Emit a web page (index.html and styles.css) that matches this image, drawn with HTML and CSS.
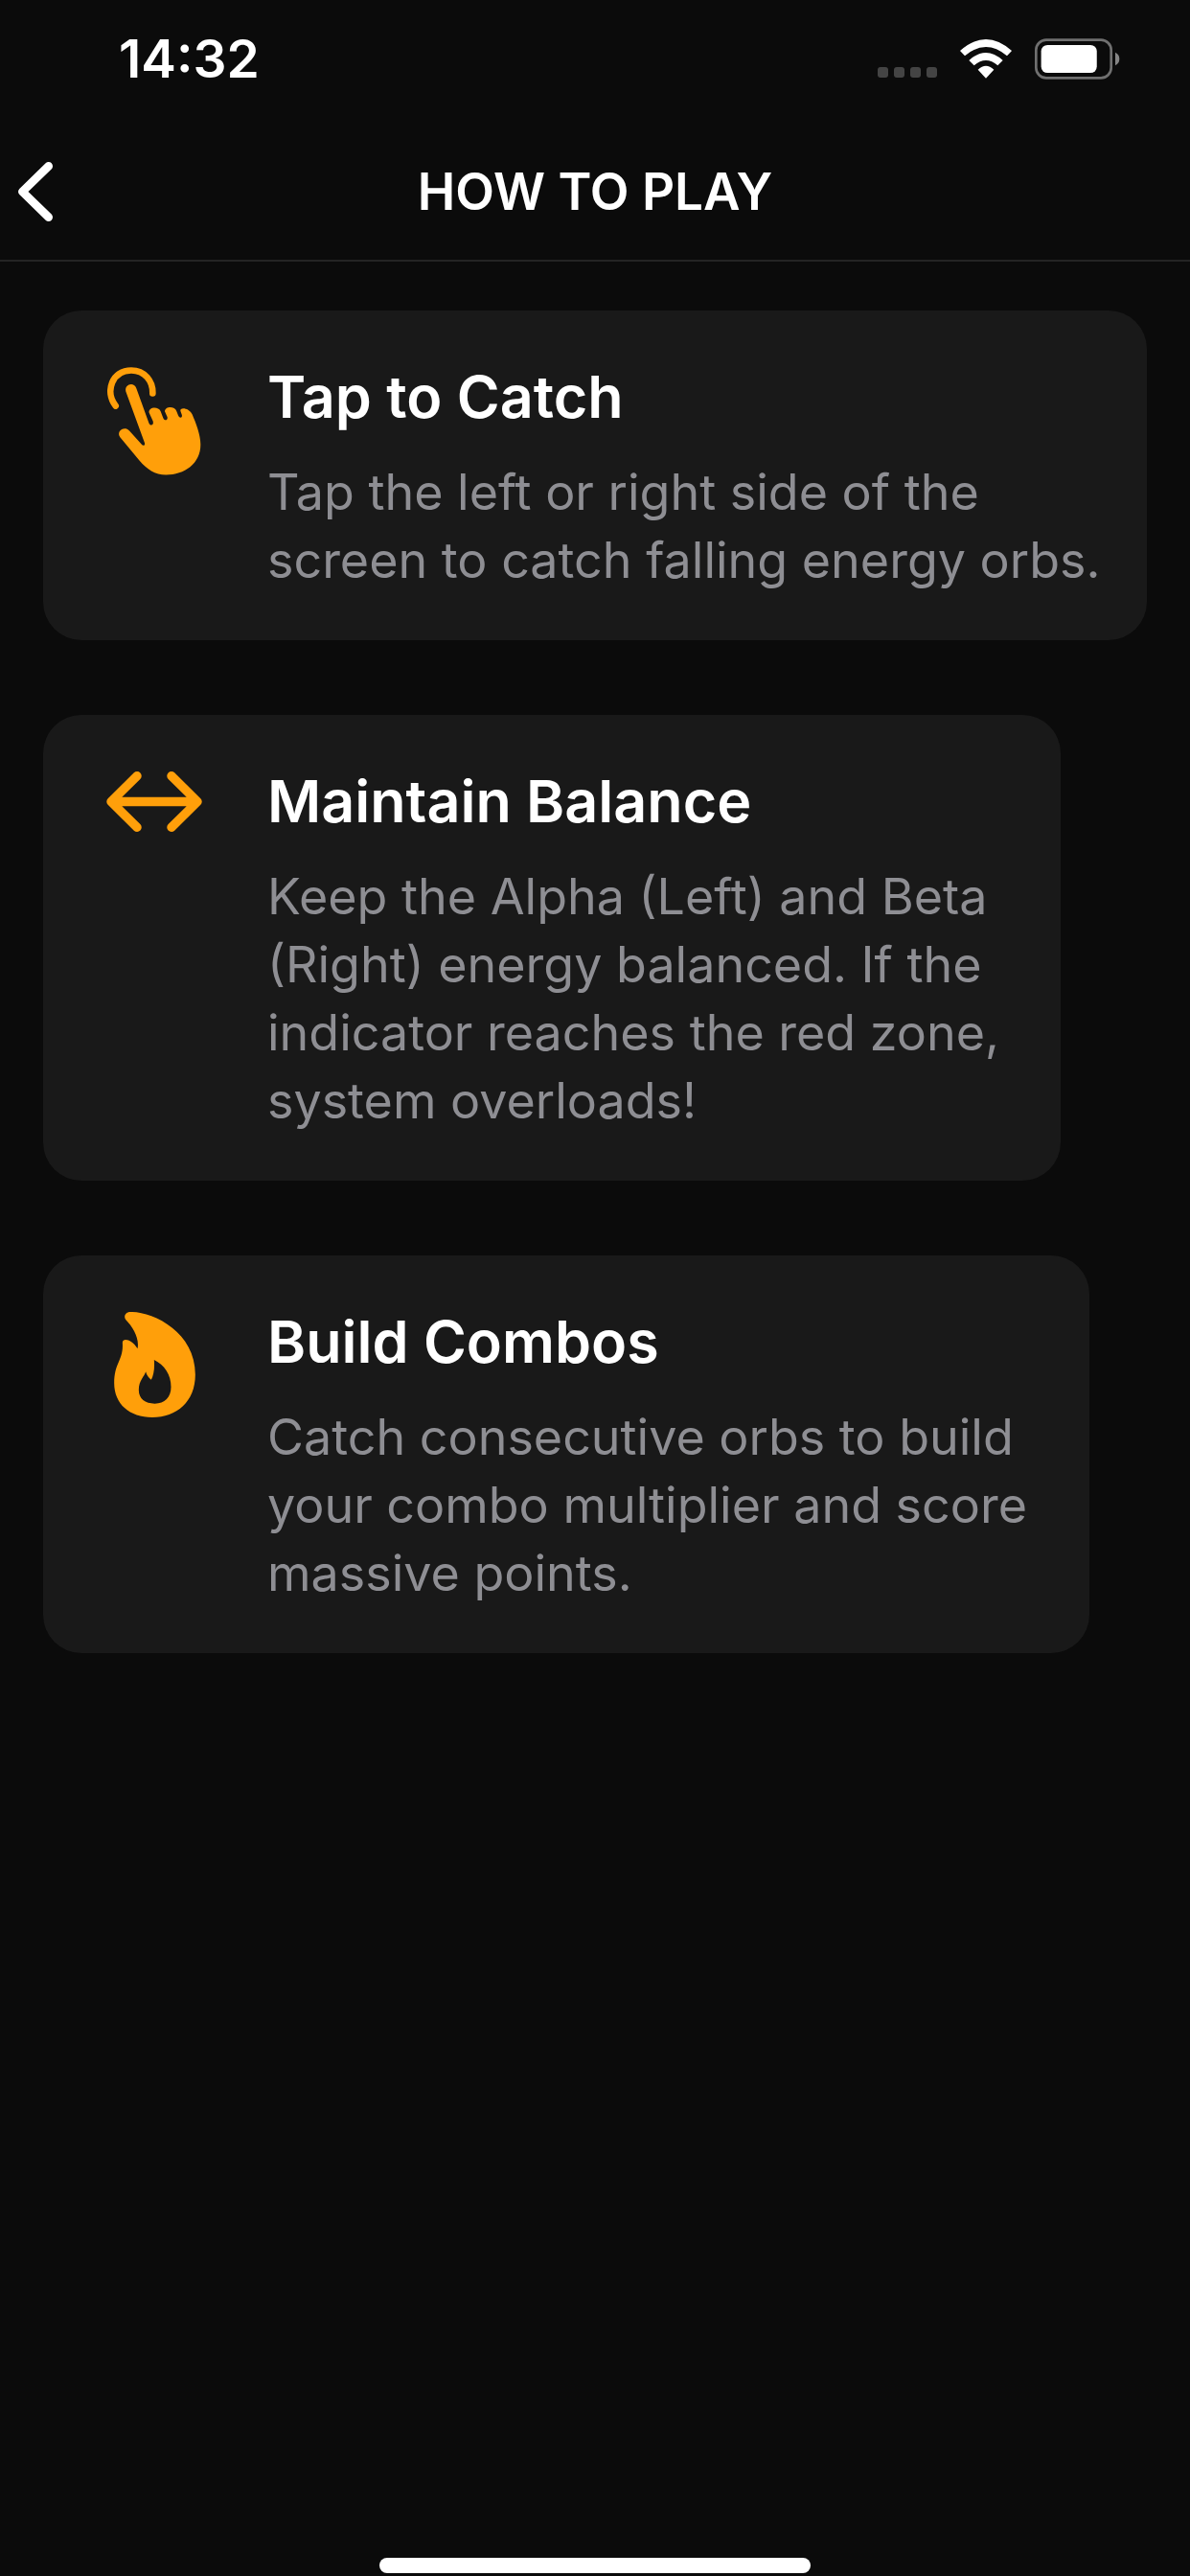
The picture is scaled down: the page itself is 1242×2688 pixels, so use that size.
FILE: index.html
```
<!DOCTYPE html>
<html lang="en">
<head>
    <meta charset="UTF-8">
    <meta name="viewport" content="width=device-width, initial-scale=1.0">
    <title>How to Play</title>
    <link rel="stylesheet" href="styles.css">
</head>
<body>
    <div class="status-bar">
        <time class="clock">14:32</time>
        <div class="status-icons">
            <div class="signal"><i></i><i></i><i></i><i></i></div>
            <svg class="wifi" viewBox="0 0 162 123" aria-hidden="true">
                <path d="M0 36 Q81 -36 162 36 L147 52 Q81 -4 15 52Z"/>
                <path d="M28 66 Q81 18 134 66 L118 82 Q81 50 44 82Z"/>
                <path d="M56 95 Q81 72 106 95 L81 122Z"/>
            </svg>
            <svg class="battery" viewBox="0 0 268 128" aria-hidden="true">
                <rect class="battery-case" x="4" y="4" width="236" height="120" rx="32"/>
                <rect class="battery-level" x="20" y="20" width="175" height="88" rx="20"/>
                <path class="battery-tip" d="M253 44 Q266 50 266 64 Q266 78 253 84Z"/>
            </svg>
        </div>
    </div>

    <header class="navbar">
        <button class="back-button" aria-label="Back">
            <svg viewBox="0 0 108 186" aria-hidden="true"><path d="M95 13 L13 93 L95 173"/></svg>
        </button>
        <h1>HOW TO PLAY</h1>
    </header>

    <main class="container">
        <section class="card">
            <div class="card-icon">
                <svg class="icon-tap" viewBox="0 0 294 338" aria-hidden="true">
                    <path class="ring" d="M26 121 C-9 75 16 10 75 10 C117 10 143 43 142 82"/>
                    <path d="M58 76 C53 53 83 45 91 66 L130 174 C134 186 147 181 143 169 L131 143 C126 125 160 120 167 138 L175 159 C180 170 190 166 188 156 L180 138 C180 123 211 120 217 138 L222 151 C227 162 237 158 233 148 L229 137 C226 124 256 126 266 148 C277 174 292 211 292 242 C292 303 241 337 184 337 C149 337 124 320 101 293 L40 219 C27 202 52 182 69 199 L107 241 C112 248 119 245 117 237Z"/>
                </svg>
            </div>
            <div class="card-text">
                <h2>Tap to Catch</h2>
                <p>Tap the left or right side of the<br>screen to catch falling energy orbs.</p>
            </div>
        </section>

        <section class="card card-narrow">
            <div class="card-icon">
                <svg class="icon-arrows" viewBox="0 0 300 190" aria-hidden="true">
                    <path d="M96 14 L14 95 L96 176 M204 14 L286 95 L204 176 M18 95 H282"/>
                </svg>
            </div>
            <div class="card-text">
                <h2>Maintain Balance</h2>
                <p>Keep the Alpha (Left) and Beta<br>(Right) energy balanced. If the<br>indicator reaches the red zone,<br>system overloads!</p>
            </div>
        </section>

        <section class="card card-medium">
            <div class="card-icon">
                <svg class="icon-flame" viewBox="0 0 254 330" aria-hidden="true">
                    <path fill-rule="evenodd" d="M50 0 C118 -2 254 60 254 196 C254 281 196 330 119 330 C49 330 0 289 0 223 C0 158 30 150 26 96 C26 81 54 83 73 115 C80 84 59 47 36 24 C28 12 37 0 50 0Z M125 150 C127 176 124 198 116 212 C108 206 101 198 99 187 C95 202 77 214 77 244 C77 273 97 287 127 287 C158 287 178 268 178 235 C178 195 157 166 125 150Z"/>
                </svg>
            </div>
            <div class="card-text">
                <h2>Build Combos</h2>
                <p>Catch consecutive orbs to build<br>your combo multiplier and score<br>massive points.</p>
            </div>
        </section>
    </main>

    <footer class="home-area">
        <div class="home-bar"></div>
    </footer>
</body>
</html>
```

FILE: styles.css
```
* {
    box-sizing: border-box;
}
body {
    margin: 0;
    min-height: 100vh;
    display: flex;
    flex-direction: column;
    background: #0b0b0b;
    color: #fff;
    font-family: Inter, "Liberation Sans", sans-serif;
}
h1, h2, p {
    margin: 0;
}
svg {
    display: block;
}

/* status bar */
.status-bar {
    display: flex;
    justify-content: space-between;
    align-items: center;
    height: 132px;
    padding: 0 73px 10px 124px;
}
.clock {
    font-size: 55px;
    font-weight: 600;
    line-height: 60px;
}
.status-icons {
    display: flex;
    align-items: center;
    gap: 24px;
}
.signal {
    display: flex;
    gap: 6px;
    padding-top: 28px;
}
.signal i {
    width: 11px;
    height: 11px;
    border-radius: 3px;
    background: #444;
}
.wifi {
    width: 54px;
    height: 41px;
    fill: #fff;
}
.battery {
    width: 89px;
    height: 43px;
}
.battery-case {
    fill: none;
    stroke: #707070;
    stroke-width: 8;
}
.battery-level {
    fill: #fff;
}
.battery-tip {
    fill: #858585;
}

/* title bar */
.navbar {
    display: grid;
    grid-template-columns: 120px 1fr 120px;
    align-items: center;
    height: 141px;
    padding-bottom: 3px;
    border-bottom: 2px solid #242424;
}
.navbar h1 {
    font-size: 53px;
    font-weight: 600;
    line-height: 66px;
    text-align: center;
}
.back-button {
    height: 100px;
    padding: 0 19px;
    border: none;
    background: none;
    cursor: pointer;
}
.back-button svg {
    width: 36px;
    height: 62px;
    fill: none;
    stroke: #fff;
    stroke-width: 26;
    stroke-linecap: round;
    stroke-linejoin: round;
}

/* cards */
.container {
    flex: 1;
    display: flex;
    flex-direction: column;
    gap: 78px;
    padding: 51px 45px;
}
.card {
    display: flex;
    gap: 58px;
    padding: 48px 24px 48px 56px;
    border-radius: 40px;
    background: #191919;
}
.card-narrow {
    margin-right: 90px;
}
.card-medium {
    margin-right: 60px;
}
.card-icon {
    flex: none;
    display: flex;
    justify-content: center;
    align-items: flex-start;
    width: 120px;
    padding-top: 11px;
    fill: #ff9f0a;
}
.icon-tap {
    width: 98px;
    height: 113px;
}
.ring {
    fill: none;
    stroke: #ff9f0a;
    stroke-width: 20;
    stroke-linecap: round;
}
.icon-arrows {
    width: 100px;
    height: 63px;
    fill: none;
    stroke: #ff9f0a;
    stroke-width: 28;
    stroke-linecap: round;
    stroke-linejoin: round;
}
.icon-flame {
    width: 85px;
    height: 110px;
}
.card-text h2 {
    margin-bottom: 22px;
    font-size: 61px;
    font-weight: 600;
    line-height: 84px;
}
.card-text p {
    color: #8e8e93;
    font-size: 52px;
    line-height: 71px;
}

.home-area {
    display: flex;
    justify-content: center;
    padding-bottom: 3px;
}
.home-bar {
    width: 450px;
    height: 16px;
    border-radius: 8px;
    background: #fff;
}
```
